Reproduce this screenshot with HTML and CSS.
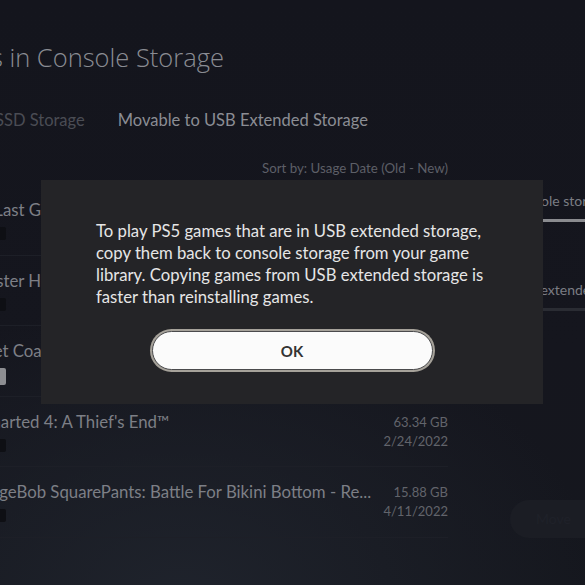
FILE: index.html
```html
<!DOCTYPE html>
<html lang="en">
<head>
    <meta charset="UTF-8">
    <meta name="viewport" content="width=device-width, initial-scale=1.0">
    <title>Games in Console Storage</title>
    <link rel="stylesheet" href="styles.css">
</head>
<body>
    <div id="screen">
        <div class="main">
            <div class="title-wrap">
                <h1 class="page-title">Games in Console Storage</h1>
            </div>
            <div class="tabs">
                <span class="tab">M.2 SSD Storage</span>
                <span class="tab active">Movable to USB Extended Storage</span>
            </div>
            <div class="sort">Sort by: Usage Date (Old - New)</div>

            <div class="game-list">
                <div class="row">
                    <div class="game">
                        <div class="name">The Last Guardian™</div>
                        <span class="badge">PS4</span>
                    </div>
                    <div class="info">
                        <div>12.73 GB</div>
                        <div>11/2/2021</div>
                    </div>
                </div>
                <div class="row">
                    <div class="game">
                        <div class="name">Monster Hunter: World</div>
                        <span class="badge">PS4</span>
                    </div>
                    <div class="info">
                        <div>48.10 GB</div>
                        <div>1/14/2022</div>
                    </div>
                </div>
                <div class="row">
                    <div class="game">
                        <div class="name">Planet Coaster: Console Edition</div>
                        <span class="badge light">PS5</span>
                    </div>
                    <div class="info">
                        <div>9.52 GB</div>
                        <div>2/3/2022</div>
                    </div>
                </div>
                <div class="row">
                    <div class="game">
                        <div class="name">Uncharted 4: A Thief's End™</div>
                        <span class="badge">PS4</span>
                    </div>
                    <div class="info">
                        <div>63.34 GB</div>
                        <div>2/24/2022</div>
                    </div>
                </div>
                <div class="row">
                    <div class="game">
                        <div class="name">SpongeBob SquarePants: Battle For Bikini Bottom - Re...</div>
                        <span class="badge">PS4</span>
                    </div>
                    <div class="info">
                        <div>15.88 GB</div>
                        <div>4/11/2022</div>
                    </div>
                </div>
            </div>
        </div>

        <div class="side">
            <div class="storage">
                <div class="label">Console storage</div>
                <div class="bar"><div class="fill" style="width: 100%"></div></div>
            </div>
            <div class="storage">
                <div class="label">USB extended storage</div>
                <div class="bar"><div class="fill" style="width: 0%"></div></div>
            </div>
            <div class="move-btn">Move</div>
        </div>

        <div id="dialog">
            <p>To play PS5 games that are in USB extended storage, copy them back to console storage from your game library. Copying games from USB extended storage is faster than reinstalling games.</p>
            <button id="ok-btn">OK</button>
        </div>
    </div>
</body>
</html>
```

FILE: styles.css
```css
body {
    margin: 0;
    background: #15161d;
    font-family: Lato, "Open Sans", sans-serif;
}
#screen {
    position: relative;
    width: 585px;
    height: 585px;
    overflow: hidden;
    display: flex;
    background:
        radial-gradient(ellipse 420px 300px at 180px 600px, #1f232c 0%, rgba(31, 35, 44, 0) 100%),
        linear-gradient(180deg, #14151d 0%, #15161e 60%, #15171e 100%);
}
.main {
    margin-left: -38px;
    width: 486px;
    flex-shrink: 0;
    display: flex;
    flex-direction: column;
}
.title-wrap {
    width: 262px;
    display: flex;
    justify-content: flex-end;
    margin-top: 41px;
}
.page-title {
    margin: 0;
    font-family: "Open Sans", sans-serif;
    font-size: 25.5px;
    font-weight: 300;
    line-height: 32px;
    color: #8a8c93;
    white-space: nowrap;
}
.tabs {
    display: flex;
    gap: 33px;
    margin-top: 36px;
    font-size: 16.5px;
    line-height: 22px;
    white-space: nowrap;
}
.tab {
    color: #4a4c54;
}
.tab.active {
    color: #8b8d94;
}
.sort {
    margin-top: 28px;
    text-align: right;
    font-size: 13.3px;
    line-height: 18px;
    color: #5d5f67;
}
.game-list {
    margin-top: 8px;
}
.row {
    display: flex;
    justify-content: space-between;
    height: 70.5px;
    padding-top: 14px;
    box-sizing: border-box;
    border-bottom: 1px solid #1d1f27;
}
.game {
    min-width: 0;
}
.name {
    font-size: 16.8px;
    line-height: 22px;
    color: #7d7f86;
    white-space: nowrap;
}
.badge {
    display: inline-block;
    margin-top: 3px;
    width: 44px;
    height: 13px;
    border-radius: 2px;
    background: #0e0f14;
    color: #0e0f14;
    font-size: 9px;
    line-height: 13px;
    text-align: center;
}
.badge.light {
    height: 17px;
    margin-top: 2px;
    background: #8d8e92;
    color: #8d8e92;
}
.info {
    text-align: right;
    font-size: 13px;
    line-height: 19px;
    color: #62646b;
    padding-top: 2px;
    white-space: nowrap;
}
.side {
    flex: 1;
    padding-left: 62px;
}
.storage .label {
    font-size: 14px;
    line-height: 18px;
    color: #7b7d84;
    white-space: nowrap;
}
.storage:first-child {
    margin-top: 192px;
}
.storage + .storage {
    margin-top: 59px;
}
.bar {
    margin-top: 9px;
    height: 3px;
    width: 150px;
    background: #2a2c33;
}
.fill {
    height: 100%;
    background: #8a8b8f;
}
.move-btn {
    margin-top: 189px;
    width: 150px;
    height: 38px;
    border-radius: 19px;
    background: #1b1d24;
    color: #1f2129;
    font-size: 14px;
    line-height: 38px;
    padding-left: 26px;
    box-sizing: border-box;
}
#dialog {
    position: absolute;
    left: 41px;
    top: 180px;
    width: 502px;
    height: 224px;
    background: #242427;
    box-sizing: border-box;
    padding: 40px 55px 0;
}
#dialog p {
    margin: 0;
    font-size: 16.7px;
    line-height: 22px;
    color: #e6e6e6;
}
#ok-btn {
    display: block;
    margin: 23px auto 0;
    width: 281px;
    height: 39px;
    border-radius: 20px;
    border: 1px solid #4a4a4c;
    box-shadow: 0 0 0 2px #a6a29a;
    background: #fbfbfb;
    font-family: Lato, sans-serif;
    font-size: 15px;
    font-weight: 700;
    color: #333333;
}
```
